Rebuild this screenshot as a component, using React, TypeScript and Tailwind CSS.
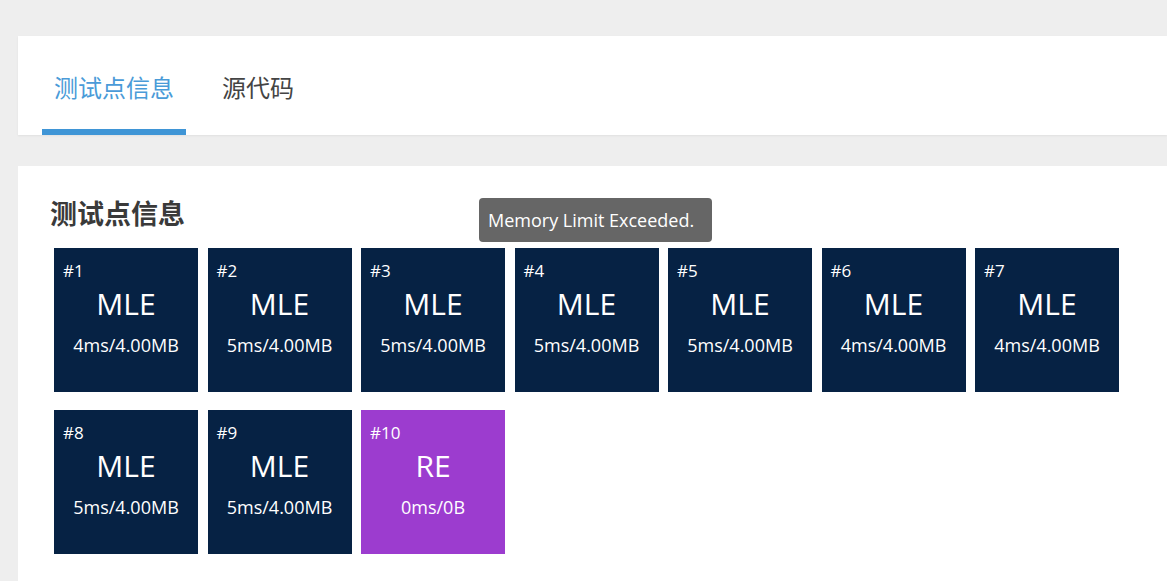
const cases = [
  { id: 1, status: "MLE", info: "4ms/4.00MB" },
  { id: 2, status: "MLE", info: "5ms/4.00MB" },
  { id: 3, status: "MLE", info: "5ms/4.00MB" },
  { id: 4, status: "MLE", info: "5ms/4.00MB" },
  { id: 5, status: "MLE", info: "5ms/4.00MB" },
  { id: 6, status: "MLE", info: "4ms/4.00MB" },
  { id: 7, status: "MLE", info: "4ms/4.00MB" },
  { id: 8, status: "MLE", info: "5ms/4.00MB" },
  { id: 9, status: "MLE", info: "5ms/4.00MB" },
  { id: 10, status: "RE", info: "0ms/0B" },
];

export default function App() {
  return (
    <div
      className="min-h-[581px] overflow-hidden bg-[#eeeeee] pt-9 pl-[18px]"
      style={{ fontFamily: '"Open Sans", "Noto Sans CJK SC", sans-serif' }}
    >
      <div className="flex h-[99px] items-end bg-white pl-6 shadow-[0_1px_2px_rgba(0,0,0,0.06)]">
        <div className="flex h-full w-[144px] flex-col items-center border-b-[6px] border-[#3f95d6]">
          <span className="mt-[36px] text-[24px] leading-[32px] text-[#4a9bd8]">测试点信息</span>
        </div>
        <div className="flex h-full flex-col pl-9">
          <span className="mt-[36px] text-[24px] leading-[32px] text-[#444]">源代码</span>
        </div>
      </div>

      <div className="mt-[31px] bg-white pl-8 pt-[30px] pb-8">
        <h2 className="text-[27px] font-bold leading-[36px] text-[#3a3a3a]">测试点信息</h2>
        <div className="relative mt-4 ml-1 flex w-[1080px] flex-wrap gap-x-[9.5px] gap-y-[18px]">
          {cases.map((c) => (
            <div
              key={c.id}
              className={
                "flex h-[144px] w-[144px] flex-col text-white " +
                (c.status === "RE" ? "bg-[#9c3ccf]" : "bg-[#062244]")
              }
            >
              <span className="pl-[9px] pt-[12px] text-[17px] leading-[22px]">#{c.id}</span>
              <span className="mt-[2px] text-center text-[30px] leading-[40px]">{c.status}</span>
              <span className="mt-[9px] text-center text-[18px] leading-[24px]">{c.info}</span>
            </div>
          ))}
          <div className="absolute top-[-50px] left-[425px] rounded bg-[#666666] py-[10px] pl-[9px] pr-[18px] text-[18px] leading-[24px] text-white">
            Memory Limit Exceeded.
          </div>
        </div>
      </div>
    </div>
  );
}
